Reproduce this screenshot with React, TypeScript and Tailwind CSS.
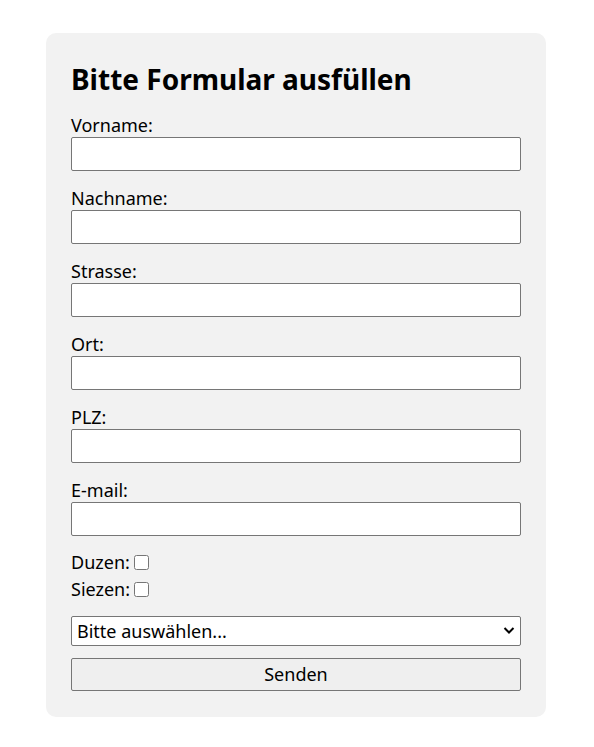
import React from "react";

export default function App() {
  const fields = ["Vorname:", "Nachname:", "Strasse:", "Ort:", "PLZ:", "E-mail:"];

  return (
    <div className="min-h-screen bg-white pt-[33px] font-['Noto_Sans',sans-serif] text-black">
      <form className="ml-[46px] w-[500px] rounded-[10px] bg-[#f2f2f2] px-[25px] pt-[25px] pb-[26px]">
        <h2 className="text-[28px] font-bold leading-[42px] mb-[13px]">Bitte Formular ausfüllen</h2>

        {fields.map((label) => (
          <div key={label} className="mb-[15px]">
            <label className="block text-[18px] leading-[24px]">{label}</label>
            <input
              type="text"
              className="block h-[34px] w-full rounded-[2px] border border-[#767676] bg-white px-2"
            />
          </div>
        ))}

        <div className="-mt-[2px] text-[18px] leading-[27px]">
          <div className="flex items-center">
            Duzen:
            <input type="checkbox" className="ml-[4px] h-[15px] w-[15px]" />
          </div>
          <div className="flex items-center">
            Siezen:
            <input type="checkbox" className="ml-[4px] h-[15px] w-[15px]" />
          </div>
        </div>

        <div className="relative mt-[13px]">
          <select className="block h-[30px] w-full appearance-none rounded-[2px] border border-[#767676] bg-white pl-[5px] text-[18px] leading-[28px]">
            <option>Bitte auswählen...</option>
          </select>
          <svg
            className="pointer-events-none absolute right-[6px] top-[10px]"
            width="12"
            height="9"
            viewBox="0 0 12 9"
          >
            <path d="M1.5 2 L6 6.5 L10.5 2" fill="none" stroke="#000" strokeWidth="2" />
          </svg>
        </div>

        <button
          type="button"
          className="mt-[12px] block h-[33px] w-full rounded-[2px] border border-[#767676] bg-[#efefef] text-[18px]"
        >
          Senden
        </button>
      </form>
    </div>
  );
}
